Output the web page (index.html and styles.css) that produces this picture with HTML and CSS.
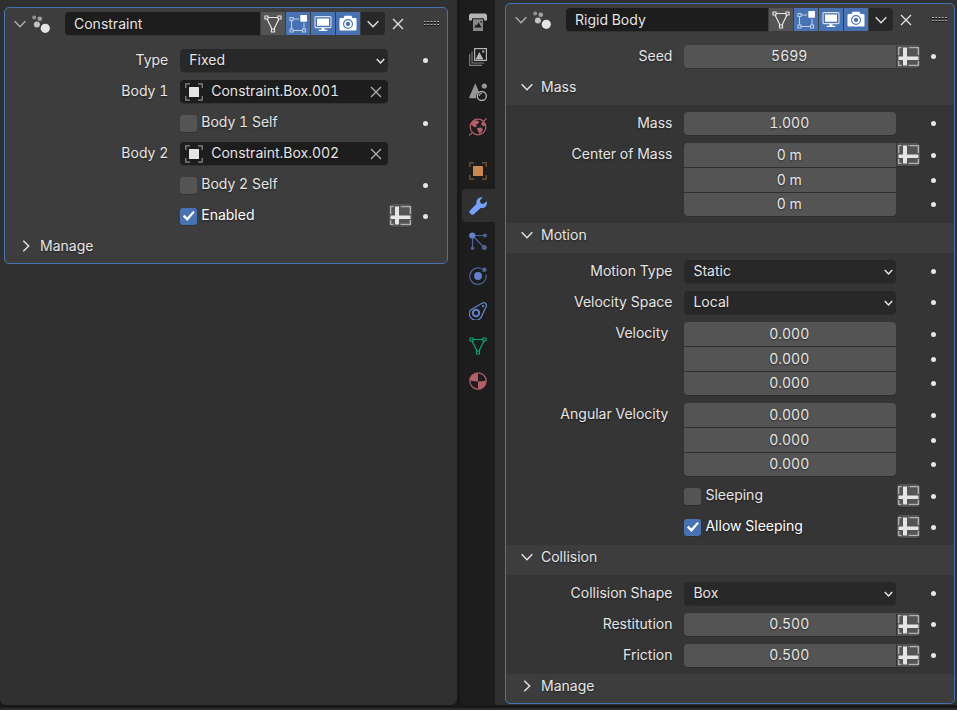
FILE: index.html
```html
<!DOCTYPE html>
<html lang="en">
<head>
    <meta charset="UTF-8">
    <meta name="viewport" content="width=device-width, initial-scale=1.0">
    <title>Modifier Properties</title>
    <link rel="stylesheet" href="styles.css">
</head>
<body>
    <!-- Icon sprite -->
    <svg class="sprite" aria-hidden="true">
        <symbol id="down" viewBox="0 0 12 12"><path d="M.7 3.3 6 8.7l5.3-5.4" fill="none" stroke="currentColor" stroke-width="1.4"/></symbol>
        <symbol id="caret" viewBox="0 0 9 9"><path d="M.8 3 4.500 7l3.700-4" fill="none" stroke="currentColor" stroke-width="1.500"/></symbol>
        <symbol id="right" viewBox="0 0 12 12"><path d="M3.3.7 8.7 6l-5.4 5.3" fill="none" stroke="currentColor" stroke-width="1.4"/></symbol>
        <symbol id="close" viewBox="0 0 12 12"><path d="m1 1 10 10M11 1 1 11" fill="none" stroke="currentColor" stroke-width="1.3"/></symbol>
        <symbol id="physics-mod" viewBox="0 0 20 20">
            <g fill="currentColor"><circle cx="2.2" cy="3.4" r="2" opacity=".5"/><circle cx="7.8" cy="4.8" r="2.3" opacity=".6"/><circle cx="4.9" cy="10.6" r="3" opacity=".8"/><circle cx="13.3" cy="14.3" r="4.6"/></g>
        </symbol>
        <symbol id="mesh" viewBox="0 0 18 18">
            <path d="M1 1h3v3H1zM14 1h3v3h-3zM7.5 14h3v3h-3zM4 2.5h10M3 4l5 10M15 4l-5 10" fill="none" stroke="currentColor" stroke-width="1.2"/>
        </symbol>
        <symbol id="edit" viewBox="0 0 18 18">
            <path d="M1 2.5h3v3H1zM1 14h3v3H1zM13.5 14h3v3h-3zM4 4h6M2.5 5.5V14M4 15.5h9.5M15 8v6" fill="none" stroke="currentColor" stroke-width="1.1" opacity=".65"/>
            <rect x="11.3" y="0" width="6.7" height="6.7" rx=".7" fill="currentColor"/>
        </symbol>
        <symbol id="monitor" viewBox="0 0 18 18">
            <rect x="1" y="1.6" width="16" height="11" rx="1" fill="none" stroke="currentColor" stroke-width="1.1" opacity=".8"/>
            <path d="M3 3.5h12v7.2H3z" fill="currentColor"/><path d="M7.5 13h3v1.8h2.8v1.1H4.7v-1.1h2.8z" fill="currentColor"/>
        </symbol>
        <symbol id="camera" viewBox="0 0 18 18">
            <path fill-rule="evenodd" fill="currentColor" d="M5.5.8h7l1 2.2h2.8q1.2 0 1.2 1.2v10.2q0 1.2-1.2 1.2H1.7Q.5 15.6.5 14.4V4.2Q.5 3 1.7 3h2.8zM9 4a5 5 0 1 0 0 10A5 5 0 0 0 9 4z"/>
            <circle cx="9" cy="9" r="3" fill="none" stroke="currentColor" stroke-width="1.7"/>
        </symbol>
        <symbol id="object" viewBox="0 0 18 18">
            <path d="M5 .8H.8V5M13 .8h4.2V5M5 17.2H.8V13M13 17.2h4.2V13" fill="none" stroke="currentColor" stroke-width="1.2" opacity=".55"/>
            <rect x="4" y="4" width="10" height="10" rx=".6" fill="currentColor"/>
        </symbol>
        <symbol id="attribute" viewBox="0 0 21 19">
            <path d="M3.5.7H.7V8M12 .7h8.3V8M10.5.7h1M.7 14v4.3h2.8M10.5 18.3h9.8V14" fill="none" stroke="currentColor" stroke-width="1.3" opacity=".65"/>
            <path d="M5 .5h4v9h11.5V13H9v5.500H5V13H.5V9.500H5z" fill="currentColor"/>
        </symbol>
        <symbol id="grip" viewBox="0 0 15 8">
            <path d="M0 2.500h15M0 5.500h15" stroke="#111" stroke-dasharray="2 1.250"/>
            <path d="M0 1.500h15M0 4.500h15" stroke="#aaa" stroke-dasharray="2 1.250"/>
        </symbol>
        <symbol id="printer" viewBox="0 0 18 18">
            <path d="M1.5.5h15L18 2v5.5h-3V5.3H3v2.2H0V2z" fill="currentColor"/>
            <path fill-rule="evenodd" d="M4 6.3h10V18H4zM5.3 14.5h7.4L9.6 9.4l-1.9 3-.9-1zM11.5 8v1.5H13V8z" fill="currentColor" opacity=".7"/>
        </symbol>
        <symbol id="layers" viewBox="0 0 18 18">
            <path d="M.6 6v11.4H13M3 3.5V15h12" fill="none" stroke="currentColor" stroke-width="1.1" opacity=".65"/>
            <rect x="5.6" y=".6" width="11.8" height="11.8" fill="none" stroke="currentColor" stroke-width="1.2"/>
            <path d="M6.5 11.5 10.3 4l4.2 7.5zM13.2 2.5h2v2h-2z" fill="currentColor"/>
        </symbol>
        <symbol id="scene" viewBox="0 0 18 18">
            <path d="M6.3.3 10 9a5.5 5.5 0 0 0-2.8 6.3h-6Q0 15.300.3 14z" fill="currentColor" opacity=".8"/>
            <circle cx="15.3" cy="3" r="2.6" fill="currentColor" opacity=".8"/>
            <circle cx="12.8" cy="13" r="4.5" fill="none" stroke="currentColor" stroke-width="1.3"/>
            <path d="M10.2 13a2.6 2.6 0 0 1 2.6-2.6" fill="none" stroke="currentColor"/>
        </symbol>
        <symbol id="world" viewBox="0 0 18 18">
            <circle cx="9" cy="9" r="7.8" fill="none" stroke="currentColor" stroke-width="1.2"/>
            <path d="M2 6.500 3.500 3.500 7 2.200l3 1-.5 2.300-2.500.8 1 1.700-2 1.500L4 8zM8 10l4-.5 2 2-1.500 2.500-2 2L9 13zM13.500 3.500l3 3.500-2 1.500L12 6z" fill="currentColor"/>
            <path d="m0 17.500 3-2.500M15 3l2.500-2.500" stroke="currentColor" stroke-width="1.2"/>
        </symbol>
        <symbol id="wrench" viewBox="0 0 18 18">
            <path d="M13.7.5 10.9 3.300l.7 3 3 .7 3-2.800q1 3.800-1.300 5.700-2 1.600-4.300.8L4.800 17.200q-1.600 1.300-3.300-.4-2-1.700-.5-3.400L7.500 6.700Q6.900 3.800 8.800 1.800 11-.3 13.700.5z" fill="currentColor"/>
        </symbol>
        <symbol id="particles" viewBox="0 0 18 18">
            <g opacity=".7"><path d="M3.5 3.500H15M3.500 3.500v13M3.500 3.500 15 15.500" stroke="currentColor" stroke-width="1.2"/><circle cx="16" cy="3.5" r="2" fill="currentColor"/><circle cx="3.5" cy="16.3" r="1.7" fill="currentColor"/><circle cx="15.3" cy="15.5" r="2.5" fill="currentColor"/></g>
            <circle cx="3.3" cy="3.5" r="3.1" fill="currentColor"/>
        </symbol>
        <symbol id="orbit" viewBox="0 0 18 18">
            <circle cx="9" cy="9" r="3.9" fill="currentColor"/>
            <g opacity=".7"><path d="M12.500 1.800A8.200 8.200 0 1 0 17 7.500" fill="none" stroke="currentColor" stroke-width="1.2"/><circle cx="15.3" cy="2.7" r="2.3" fill="currentColor"/></g>
        </symbol>
        <symbol id="constraints" viewBox="0 0 18 18">
            <path d="M1.500 8 13 1.200q2-1.200 3.700.5 1 1.200.5 2.800l-4 8.500A6.500 6.500 0 1 1 1.500 8z" fill="none" stroke="currentColor" stroke-width="1.3"/>
            <circle cx="7" cy="11" r="3.2" fill="none" stroke="currentColor" stroke-width="2"/><circle cx="14" cy="4.2" r="1.1" fill="currentColor"/>
        </symbol>
        <symbol id="material" viewBox="0 0 18 18">
            <circle cx="9" cy="9" r="8.2" fill="none" stroke="currentColor" stroke-width="1.2"/>
            <path d="M9 1v8.500Q5 9.500 1 8.500 1.500 2 9 1zM9 9.500q4 0 8-1-.5 7.500-8 8.500z" fill="currentColor"/>
        </symbol>
    </svg>

    <div class="workspace">
        <!-- Constraint modifier -->
        <main class="area area-left">
            <section class="panel">
                <header class="panel-header">
                    <button class="toggle" aria-label="Collapse"><svg class="i12"><use href="#down"/></svg></button>
                    <svg class="i20"><use href="#physics-mod"/></svg>
                    <input class="name" type="text" value="Constraint" aria-label="Modifier name">
                    <div class="modes">
                        <button class="mode" aria-label="On cage"><svg class="i18"><use href="#mesh"/></svg></button>
                        <button class="mode on" aria-label="Edit mode"><svg class="i18"><use href="#edit"/></svg></button>
                        <button class="mode on" aria-label="Realtime"><svg class="i18"><use href="#monitor"/></svg></button>
                        <button class="mode on" aria-label="Render"><svg class="i18"><use href="#camera"/></svg></button>
                        <button class="mode more" aria-label="More"><svg class="i12"><use href="#down"/></svg></button>
                    </div>
                    <button class="close" aria-label="Remove modifier"><svg class="i12"><use href="#close"/></svg></button>
                    <svg class="grip"><use href="#grip"/></svg>
                </header>
                <div class="rows">
                    <div class="row">
                        <label class="label" for="type">Type</label>
                        <div class="select"><select id="type"><option>Fixed</option></select><svg class="i9"><use href="#caret"/></svg></div>
                        <button class="dot" aria-label="Animate Type"></button>
                    </div>
                    <div class="row">
                        <label class="label" for="body1">Body 1</label>
                        <div class="id-field"><svg class="i18"><use href="#object"/></svg><input id="body1" type="text" value="Constraint.Box.001"><button aria-label="Clear Body 1"><svg class="i12"><use href="#close"/></svg></button></div>
                    </div>
                    <div class="row">
                        <label class="check"><input type="checkbox"><span>Body 1 Self</span></label>
                        <button class="dot" aria-label="Animate Body 1 Self"></button>
                    </div>
                    <div class="row">
                        <label class="label" for="body2">Body 2</label>
                        <div class="id-field"><svg class="i18"><use href="#object"/></svg><input id="body2" type="text" value="Constraint.Box.002"><button aria-label="Clear Body 2"><svg class="i12"><use href="#close"/></svg></button></div>
                    </div>
                    <div class="row">
                        <label class="check"><input type="checkbox"><span>Body 2 Self</span></label>
                        <button class="dot" aria-label="Animate Body 2 Self"></button>
                    </div>
                    <div class="row">
                        <label class="check"><input type="checkbox" checked><span>Enabled</span></label>
                        <button class="attr single" aria-label="Use attribute for Enabled"><svg><use href="#attribute"/></svg></button>
                        <button class="dot" aria-label="Animate Enabled"></button>
                    </div>
                </div>
                <button class="sub-header"><svg class="i12"><use href="#right"/></svg>Manage</button>
            </section>
        </main>

        <!-- Properties tabs -->
        <nav class="tabs">
            <button class="tab" aria-label="Output"><svg class="i18"><use href="#printer"/></svg></button>
            <button class="tab" aria-label="View Layer"><svg class="i18"><use href="#layers"/></svg></button>
            <button class="tab" aria-label="Scene"><svg class="i18"><use href="#scene"/></svg></button>
            <button class="tab red" aria-label="World"><svg class="i18"><use href="#world"/></svg></button>
            <button class="tab orange first" aria-label="Object"><svg class="i18"><use href="#object"/></svg></button>
            <button class="tab active" aria-label="Modifiers"><svg class="i18"><use href="#wrench"/></svg></button>
            <button class="tab blue" aria-label="Particles"><svg class="i18"><use href="#particles"/></svg></button>
            <button class="tab blue" aria-label="Physics"><svg class="i18"><use href="#orbit"/></svg></button>
            <button class="tab blue" aria-label="Constraints"><svg class="i18"><use href="#constraints"/></svg></button>
            <button class="tab green" aria-label="Data"><svg class="i18"><use href="#mesh"/></svg></button>
            <button class="tab red" aria-label="Material"><svg class="i18"><use href="#material"/></svg></button>
        </nav>

        <!-- Rigid Body modifier -->
        <aside class="area area-right">
            <section class="panel">
                <header class="panel-header">
                    <button class="toggle" aria-label="Collapse"><svg class="i12"><use href="#down"/></svg></button>
                    <svg class="i20"><use href="#physics-mod"/></svg>
                    <input class="name" type="text" value="Rigid Body" aria-label="Modifier name">
                    <div class="modes">
                        <button class="mode" aria-label="On cage"><svg class="i18"><use href="#mesh"/></svg></button>
                        <button class="mode on" aria-label="Edit mode"><svg class="i18"><use href="#edit"/></svg></button>
                        <button class="mode on" aria-label="Realtime"><svg class="i18"><use href="#monitor"/></svg></button>
                        <button class="mode on" aria-label="Render"><svg class="i18"><use href="#camera"/></svg></button>
                        <button class="mode more" aria-label="More"><svg class="i12"><use href="#down"/></svg></button>
                    </div>
                    <button class="close" aria-label="Remove modifier"><svg class="i12"><use href="#close"/></svg></button>
                    <svg class="grip"><use href="#grip"/></svg>
                </header>
                <div class="rows">
                    <div class="row">
                        <label class="label" for="seed">Seed</label>
                        <input class="number joined" id="seed" type="text" value="5699">
                        <button class="attr" aria-label="Use attribute for Seed"><svg><use href="#attribute"/></svg></button>
                        <button class="dot" aria-label="Animate Seed"></button>
                    </div>
                </div>

                <button class="sub-header"><svg class="i12"><use href="#down"/></svg>Mass</button>
                <div class="sub-body">
                    <div class="row">
                        <label class="label" for="mass">Mass</label>
                        <input class="number" id="mass" type="text" value="1.000">
                        <button class="dot" aria-label="Animate Mass"></button>
                    </div>
                    <div class="vector">
                        <div class="row">
                            <label class="label" for="com-x">Center of Mass</label>
                            <input class="number joined" id="com-x" type="text" value="0 m">
                            <button class="attr" aria-label="Use attribute for Center of Mass"><svg><use href="#attribute"/></svg></button>
                            <button class="dot" aria-label="Animate X"></button>
                        </div>
                        <div class="row">
                            <input class="number" type="text" value="0 m" aria-label="Center of Mass Y">
                            <button class="dot" aria-label="Animate Y"></button>
                        </div>
                        <div class="row">
                            <input class="number" type="text" value="0 m" aria-label="Center of Mass Z">
                            <button class="dot" aria-label="Animate Z"></button>
                        </div>
                    </div>
                </div>

                <button class="sub-header"><svg class="i12"><use href="#down"/></svg>Motion</button>
                <div class="sub-body">
                    <div class="row">
                        <label class="label" for="motion-type">Motion Type</label>
                        <div class="select"><select id="motion-type"><option>Static</option></select><svg class="i9"><use href="#caret"/></svg></div>
                        <button class="dot" aria-label="Animate Motion Type"></button>
                    </div>
                    <div class="row">
                        <label class="label" for="velocity-space">Velocity Space</label>
                        <div class="select"><select id="velocity-space"><option>Local</option></select><svg class="i9"><use href="#caret"/></svg></div>
                        <button class="dot" aria-label="Animate Velocity Space"></button>
                    </div>
                    <div class="vector">
                        <div class="row">
                            <label class="label axis" for="vel-x">Velocity</label>
                            <input class="number" id="vel-x" type="text" value="0.000">
                            <button class="dot" aria-label="Animate X"></button>
                        </div>
                        <div class="row">
                            <input class="number" type="text" value="0.000" aria-label="Velocity Y">
                            <button class="dot" aria-label="Animate Y"></button>
                        </div>
                        <div class="row">
                            <input class="number" type="text" value="0.000" aria-label="Velocity Z">
                            <button class="dot" aria-label="Animate Z"></button>
                        </div>
                    </div>
                    <div class="vector">
                        <div class="row">
                            <label class="label axis" for="ang-x">Angular Velocity</label>
                            <input class="number" id="ang-x" type="text" value="0.000">
                            <button class="dot" aria-label="Animate X"></button>
                        </div>
                        <div class="row">
                            <input class="number" type="text" value="0.000" aria-label="Angular Velocity Y">
                            <button class="dot" aria-label="Animate Y"></button>
                        </div>
                        <div class="row">
                            <input class="number" type="text" value="0.000" aria-label="Angular Velocity Z">
                            <button class="dot" aria-label="Animate Z"></button>
                        </div>
                    </div>
                    <div class="row">
                        <label class="check"><input type="checkbox"><span>Sleeping</span></label>
                        <button class="attr single" aria-label="Use attribute for Sleeping"><svg><use href="#attribute"/></svg></button>
                        <button class="dot" aria-label="Animate Sleeping"></button>
                    </div>
                    <div class="row">
                        <label class="check"><input type="checkbox" checked><span>Allow Sleeping</span></label>
                        <button class="attr single" aria-label="Use attribute for Allow Sleeping"><svg><use href="#attribute"/></svg></button>
                        <button class="dot" aria-label="Animate Allow Sleeping"></button>
                    </div>
                </div>

                <button class="sub-header"><svg class="i12"><use href="#down"/></svg>Collision</button>
                <div class="sub-body">
                    <div class="row">
                        <label class="label" for="shape">Collision Shape</label>
                        <div class="select"><select id="shape"><option>Box</option></select><svg class="i9"><use href="#caret"/></svg></div>
                        <button class="dot" aria-label="Animate Collision Shape"></button>
                    </div>
                    <div class="row">
                        <label class="label" for="restitution">Restitution</label>
                        <input class="number joined" id="restitution" type="text" value="0.500">
                        <button class="attr" aria-label="Use attribute for Restitution"><svg><use href="#attribute"/></svg></button>
                        <button class="dot" aria-label="Animate Restitution"></button>
                    </div>
                    <div class="row">
                        <label class="label" for="friction">Friction</label>
                        <input class="number joined" id="friction" type="text" value="0.500">
                        <button class="attr" aria-label="Use attribute for Friction"><svg><use href="#attribute"/></svg></button>
                        <button class="dot" aria-label="Animate Friction"></button>
                    </div>
                </div>
                <button class="sub-header"><svg class="i12"><use href="#right"/></svg>Manage</button>
            </section>
        </aside>
    </div>
    <footer class="statusbar"></footer>
</body>
</html>
```

FILE: styles.css
```css
* {
    box-sizing: border-box;
}
body {
    margin: 0;
    min-height: 100vh;
    display: flex;
    flex-direction: column;
    background: #181818;
    color: #e5e5e5;
    font-family: Inter, "Noto Sans", sans-serif;
    font-size: 14px;
    line-height: 22px;
    font-variant-numeric: tabular-nums;
    text-shadow: 0 1px 2px rgba(0,0,0,0.5);
}
button, input, select {
    font: inherit;
    color: inherit;
    text-shadow: inherit;
    background: none;
    border: none;
    margin: 0;
    padding: 0;
    min-width: 0;
}
svg {
    display: block;
    flex: none;
}
.sprite { position: absolute; width: 0; height: 0; }
.i9 { width: 9px; height: 9px; }
.i12 { width: 12px; height: 12px; }
.i18 { width: 18px; height: 18px; }
.i20 { width: 20px; height: 20px; }

/* Areas */
.workspace {
    flex: 1;
    display: grid;
    grid-template-columns: minmax(0, 457fr) 38px minmax(0, 462fr);
}
.area {
    background: #303030;
    border-radius: 0 0 6px 6px;
}
.area-left { padding: 7px 9px 0 4px; --edge: 9px; }
.area-right { padding: 3px 2px 1px 10px; border-radius: 0; --edge: 8px; }
.statusbar {
    height: 2px;
    margin-top: 3px;
    background: #2b2b2b;
}

/* Tabs */
.tabs {
    display: flex;
    flex-direction: column;
    gap: 2px;
    padding: 5px 0 0 2px;
    margin-left: 3px;
    background: #1d1d1d;
    border-radius: 0 0 0 6px;
}
.tab {
    height: 33px;
    display: flex;
    align-items: center;
    padding-left: 7px;
    color: #b5b5b5;
    border-radius: 4px 0 0 4px;
}
.tab.first { margin-top: 9px; }
.tab.active { background: #303030; color: #74a2ff; }
.tab.red { color: #b75f66; }
.tab.orange { color: #cc874f; }
.tab.blue { color: #6482cc; }
.tab.green { color: #00a877; }

/* Panel */
.panel {
    border: 1px solid #4772b3;
    border-radius: 5px;
    background: #3d3d3d;
    overflow: hidden;
}
.panel-header {
    display: flex;
    align-items: center;
    padding: 4px calc(var(--edge) - 1px) 0 3px;
    margin-bottom: 14px;
}
.toggle {
    width: 24px;
    height: 23px;
    display: grid;
    place-items: center;
    color: #b0b0b0;
}
.name {
    flex: 1;
    height: 23px;
    margin-left: 13px;
    padding: 0 9px 1px;
    background: #1d1d1d;
    border-radius: 4px 0 0 4px;
}
.modes {
    display: flex;
    gap: 1px;
    margin-left: 1px;
}
.mode {
    width: 24px;
    height: 23px;
    display: grid;
    place-items: center;
    background: #545454;
}
.mode.on { background: #4772b3; color: #fff; }
.mode.more { background: #282828; border-radius: 0 4px 4px 0; }
.close {
    width: 26px;
    height: 23px;
    display: grid;
    place-items: center;
}
.grip {
    width: 15px;
    height: 8px;
    margin-left: 13px;
}

/* Property rows */
.rows, .sub-body {
    display: grid;
    gap: 8px;
}
.rows { padding-bottom: 7px; }
.sub-body {
    padding: 7px 0;
    background: #353535;
}
.row {
    display: grid;
    grid-template-columns: minmax(0, 178fr) minmax(0, 211fr) 24px 26px;
    height: 23px;
    padding-right: var(--edge);
}
.label {
    padding-right: 12px;
    text-align: right;
    white-space: nowrap;
}
.label.axis { padding-right: 16px; }
.number, .select, .id-field, .check { grid-column: 2; }
.number {
    height: 23px;
    padding: 0 2px 2px 0;
    text-align: center;
    background: #545454;
    border-radius: 4px;
}
.number, .select, .id-field, .attr, .name, .check input {
    box-shadow: 0 1px 0 rgba(0,0,0,0.15);
}
.number.joined { border-radius: 4px 0 0 4px; }
.vector {
    display: grid;
    gap: 1px;
}
.vector .row { height: 24px; }
.vector .number { height: 24px; border-radius: 0; }
.vector .row:first-child .number { border-top-left-radius: 4px; }
.vector .row:first-child .number:not(.joined) { border-top-right-radius: 4px; }
.vector .row:last-child, .vector .row:last-child .number { height: 23px; }
.vector .row:last-child .number { border-radius: 0 0 4px 4px; }
.attr {
    grid-column: 3;
    width: 23px;
    height: 23px;
    margin-left: 1px;
    display: grid;
    place-items: center;
    background: #545454;
    border-radius: 0 4px 4px 0;
}
.attr.single { border-radius: 4px; }
.attr svg { width: 21px; height: 19px; }
.dot {
    grid-column: 4;
    place-self: center;
    width: 5px;
    height: 5px;
    border-radius: 50%;
    background: #e5e5e5;
}
.select {
    display: grid;
    align-items: center;
    background: #282828;
    border-radius: 4px;
}
.select select, .select svg { grid-area: 1 / 1; }
.select select {
    appearance: none;
    height: 23px;
    padding: 0 22px 2px 9px;
}
.select svg {
    justify-self: end;
    margin-right: 3px;
    pointer-events: none;
}
.id-field {
    display: flex;
    align-items: center;
    padding: 0 6px 0 5px;
    background: #1d1d1d;
    border-radius: 4px;
}
.id-field input {
    flex: 1;
    height: 23px;
    padding: 0 0 2px 8px;
}
.id-field button { color: #b0b0b0; }
.check {
    display: flex;
    align-items: center;
    gap: 4px;
    white-space: nowrap;
}
.check span { padding-bottom: 2px; }
.check input {
    appearance: none;
    width: 17px;
    height: 17px;
    display: grid;
    place-items: center;
    background: #545454;
    border-radius: 3px;
}
.check input:checked { background: #4772b3; }
.check input:checked::before {
    content: "";
    width: 12px;
    height: 10px;
    background: #fff;
    clip-path: polygon(0 54%, 14% 38%, 36% 64%, 86% 0, 100% 12%, 38% 100%);
}
.check input:checked + span { color: #fff; }

/* Sub-panel headers */
.sub-header {
    width: 100%;
    height: 30px;
    display: flex;
    align-items: center;
    gap: 8px;
    padding: 0 0 7px 15px;
}
.panel > .sub-header:last-child { height: 29px; padding-bottom: 6px; }
```
